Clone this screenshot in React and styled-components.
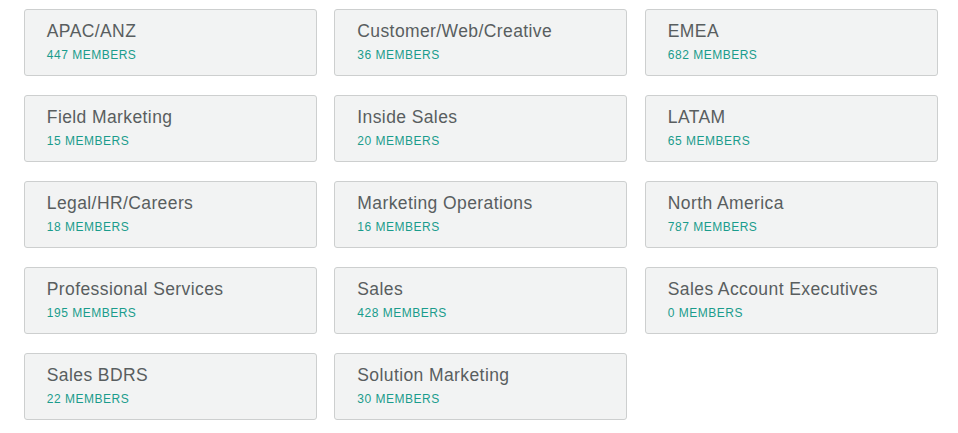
import React from "react";
import styled, { createGlobalStyle } from "styled-components";

const Global = createGlobalStyle`
  html, body { margin: 0; padding: 0; background: #fff; }
  body { font-family: "Liberation Sans", Arial, sans-serif; }
`;

const Grid = styled.div`
  display: grid;
  grid-template-columns: repeat(3, 293px);
  column-gap: 17.5px;
  row-gap: 19px;
  padding: 9px 0 0 23.8px;
`;

const Card = styled.div`
  box-sizing: border-box;
  height: 67px;
  background: #f2f3f3;
  border: 1px solid #cdcfcf;
  border-radius: 3px;
  padding: 12px 0 0 22px;
  display: flex;
  flex-direction: column;
`;

const Title = styled.div`
  font-size: 17.5px;
  line-height: 19px;
  letter-spacing: 0.4px;
  color: #595e5f;
`;

const Members = styled.div`
  margin-top: 7px;
  font-size: 12px;
  line-height: 14px;
  letter-spacing: 0.5px;
  color: #1a9c8c;
  text-transform: uppercase;
`;

const groups = [
  ["APAC/ANZ", 447],
  ["Customer/Web/Creative", 36],
  ["EMEA", 682],
  ["Field Marketing", 15],
  ["Inside Sales", 20],
  ["LATAM", 65],
  ["Legal/HR/Careers", 18],
  ["Marketing Operations", 16],
  ["North America", 787],
  ["Professional Services", 195],
  ["Sales", 428],
  ["Sales Account Executives", 0],
  ["Sales BDRS", 22],
  ["Solution Marketing", 30],
];

export default function App() {
  return (
    <>
      <Global />
      <Grid>
        {groups.map(([name, n]) => (
          <Card key={name}>
            <Title>{name}</Title>
            <Members>{n} Members</Members>
          </Card>
        ))}
      </Grid>
    </>
  );
}
